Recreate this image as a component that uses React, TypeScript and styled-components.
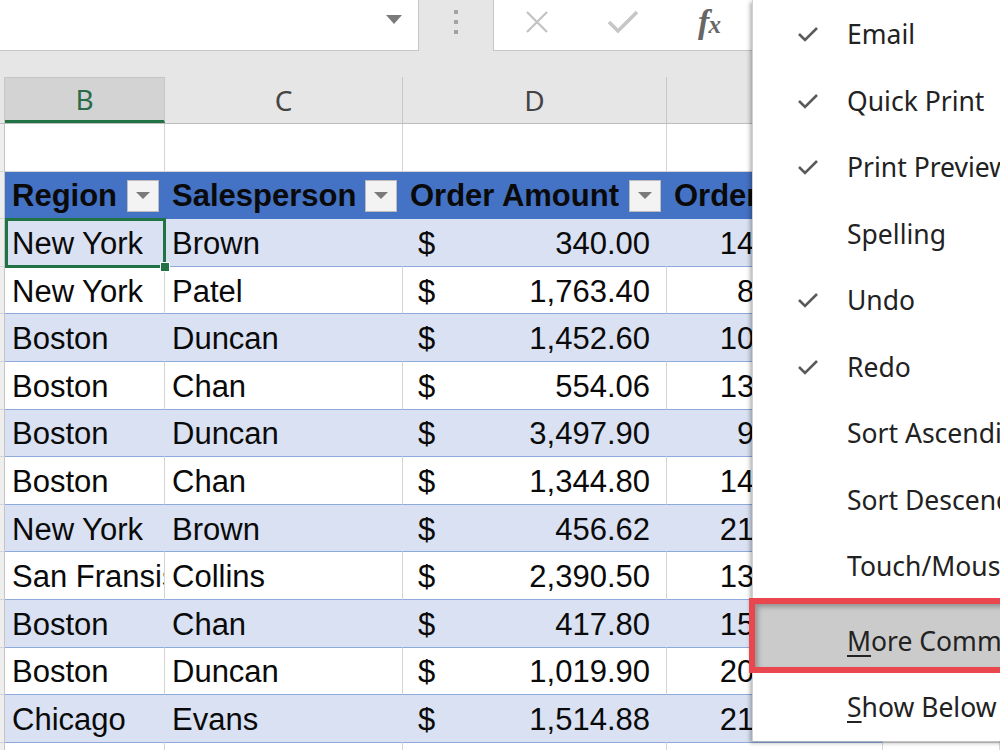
import React from "react";
import styled, { createGlobalStyle, css } from "styled-components";

const COLS = "5px 160px 238px 264px 216px 1fr";

const GlobalStyle = createGlobalStyle`
  html, body {
    margin: 0;
    padding: 0;
    width: 1000px;
    height: 750px;
    overflow: hidden;
    background: #fff;
  }
  body {
    font-family: "Liberation Sans", Arial, sans-serif;
  }
`;

type RowData = [string, string, string, string];

const rows: RowData[] = [
  ["New York", "Brown", "340.00", "14/01/2016"],
  ["New York", "Patel", "1,763.40", "8/02/2016"],
  ["Boston", "Duncan", "1,452.60", "10/02/2016"],
  ["Boston", "Chan", "554.06", "13/02/2016"],
  ["Boston", "Duncan", "3,497.90", "9/03/2016"],
  ["Boston", "Chan", "1,344.80", "14/03/2016"],
  ["New York", "Brown", "456.62", "21/03/2016"],
  ["San Fransisco", "Collins", "2,390.50", "13/04/2016"],
  ["Boston", "Chan", "417.80", "15/04/2016"],
  ["Boston", "Duncan", "1,019.90", "20/04/2016"],
  ["Chicago", "Evans", "1,514.88", "21/04/2016"],
];

const menuItems = [
  { label: "Email", checked: true },
  { label: "Quick Print", checked: true },
  { label: "Print Preview", checked: true },
  { label: "Spelling", checked: false },
  { label: "Undo", checked: true },
  { label: "Redo", checked: true },
  { label: "Sort Ascending", checked: false },
  { label: "Sort Descending", checked: false },
  { label: "Touch/Mouse Mode", checked: false },
];

const Screen = styled.div`
  position: relative;
  width: 1000px;
  height: 750px;
  overflow: hidden;
  background: #fff;
`;

/* formula bar area */
const TopBar = styled.div`
  display: flex;
  align-items: flex-start;
  height: 77px;
  background: #e6e6e6;
`;

const NameBox = styled.div`
  width: 419px;
  height: 51px;
  box-sizing: border-box;
  background: #fff;
  border-right: 1px solid #c6c6c6;
  border-bottom: 1px solid #c6c6c6;
  display: flex;
  justify-content: flex-end;
  padding: 15px 16px 0 0;
`;

const Caret = styled.span`
  width: 0;
  height: 0;
  border-left: 8px solid transparent;
  border-right: 8px solid transparent;
  border-top: 9px solid #7b7b7b;
`;

const Grip = styled.div`
  width: 74px;
  display: flex;
  flex-direction: column;
  align-items: center;
  gap: 6px;
  padding-top: 10px;
`;

const Dot = styled.span`
  width: 4px;
  height: 4px;
  background: #a3a3a3;
`;

const FormulaBox = styled.div`
  flex: 1;
  height: 51px;
  box-sizing: border-box;
  background: #fff;
  border-left: 1px solid #c6c6c6;
  border-bottom: 1px solid #c6c6c6;
  display: flex;
  align-items: center;
  padding-bottom: 6px;
`;

const IconSlot = styled.span`
  width: 86px;
  display: flex;
  justify-content: center;
  align-items: center;
`;

const Fx = styled.span`
  font-family: "Liberation Serif", serif;
  font-style: italic;
  font-weight: bold;
  color: #666;
  font-size: 34px;
  line-height: 1;
  letter-spacing: -1px;
  & small {
    font-size: 25px;
  }
`;

/* grid */
const ColHeads = styled.div`
  display: grid;
  grid-template-columns: ${COLS};
  height: 47px;
  box-sizing: border-box;
  background: #e6e6e6;
  border-bottom: 1px solid #bdbdbd;
  font-family: "Noto Sans", sans-serif;
  font-size: 28px;
  color: #444;
`;

const ColHead = styled.div<{ $active?: boolean }>`
  display: flex;
  align-items: center;
  justify-content: center;
  box-sizing: border-box;
  border-right: 1px solid #c6c6c6;
  ${(p) =>
    p.$active &&
    css`
      background: #d3d3d3;
      color: #2b6b47;
      border-top: 1px solid #c6c6c6;
      border-bottom: 3px solid #217346;
    `}
`;

const Row = styled.div`
  display: grid;
  grid-template-columns: ${COLS};
  height: 47.6px;
`;

const Stub = styled.div`
  background: #eeeeee;
  box-sizing: border-box;
  border-right: 1px solid #c4c4c4;
  border-bottom: 1px solid #d4d4d4;
`;

type Kind = "plain" | "band" | "white" | "head";

const fills: Record<Kind, string> = {
  plain: "#ffffff",
  band: "#d9e1f2",
  white: "#ffffff",
  head: "#4472c4",
};

const Cell = styled.div<{ $kind: Kind; $right?: boolean }>`
  position: relative;
  min-width: 0;
  box-sizing: border-box;
  display: flex;
  align-items: center;
  padding: 3px 7px 0;
  font-size: 31px;
  color: #0a0a0a;
  background: ${(p) => fills[p.$kind]};
  border-right: 1px solid
    ${(p) => (p.$kind === "plain" || p.$kind === "white" ? "#d4d4d4" : fills[p.$kind])};
  border-bottom: 1px solid
    ${(p) => (p.$kind === "plain" ? "#d4d4d4" : p.$kind === "head" ? "#4472c4" : "#8eaadb")};
  justify-content: ${(p) => (p.$right ? "flex-end" : "flex-start")};
  ${(p) =>
    p.$kind === "head" &&
    css`
      justify-content: space-between;
      padding: 2px 5px 0 7px;
      font-weight: bold;
    `}
`;

// text runs to the cell border before it is clipped, as in a sheet
const Text = styled.span`
  display: block;
  overflow: hidden;
  white-space: nowrap;
`;

const ClipText = styled(Text)`
  margin-right: -7px;
`;

const Money = styled.div`
  display: flex;
  justify-content: space-between;
  width: 100%;
  padding: 0 9px 0 8px;
`;

const FilterBtn = styled.span`
  flex-shrink: 0;
  width: 32px;
  height: 32px;
  box-sizing: border-box;
  background: #f3f3f3;
  border: 1px solid #bcbcbc;
  display: flex;
  align-items: center;
  justify-content: center;
  &::after {
    content: "";
    border-left: 7px solid transparent;
    border-right: 7px solid transparent;
    border-top: 7px solid #7a7a7a;
  }
`;

const Selection = styled.span`
  position: absolute;
  top: -1px;
  left: 0;
  right: -2px;
  bottom: -2px;
  border: 3px solid #217346;
  z-index: 2;
  &::after {
    content: "";
    position: absolute;
    right: -7px;
    bottom: -7px;
    width: 8px;
    height: 8px;
    background: #217346;
    border: 1px solid #fff;
  }
`;

/* quick access menu */
const Menu = styled.div`
  position: absolute;
  left: 752px;
  top: 0;
  width: 280px;
  padding-top: 1px;
  background: #fff;
  border-left: 1px solid #d0d0d0;
  box-shadow: -2px 2px 4px rgba(0, 0, 0, 0.3);
  font-family: "Noto Sans", "Open Sans", sans-serif;
  font-size: 26.5px;
  color: #222;
  z-index: 5;
`;

const MenuItem = styled.div`
  position: relative;
  display: grid;
  grid-template-columns: 94px 1fr;
  align-items: center;
  height: 66.5px;
  white-space: nowrap;
`;

const CheckSlot = styled.span`
  position: relative;
  z-index: 1;
  padding-left: 44px;
  display: flex;
`;

const Label = styled.span`
  position: relative;
  z-index: 1;
  & u {
    text-underline-offset: 4px;
  }
`;

const Separator = styled.div`
  height: 8px;
`;

const Highlight = styled.span`
  position: absolute;
  top: -9.5px;
  bottom: 1px;
  left: -4px;
  right: -30px;
  box-sizing: border-box;
  border: 6px solid #e9474d;
  background: #cbcbcb;
  box-shadow: inset 3px 3px 5px rgba(0, 0, 0, 0.28);
`;

const Check = () => (
  <svg width="22" height="16" viewBox="0 0 22 16">
    <polyline
      points="2,8 8,14 20,2"
      fill="none"
      stroke="#5a5a5a"
      strokeWidth="2.6"
    />
  </svg>
);

const CancelIcon = () => (
  <svg width="26" height="22" viewBox="0 0 26 22">
    <path d="M3 1 L23 21 M23 1 L3 21" stroke="#c2c2c2" strokeWidth="2.2" />
  </svg>
);

const EnterIcon = () => (
  <svg width="32" height="24" viewBox="0 0 32 24">
    <polyline
      points="2,12 11,21 30,2"
      fill="none"
      stroke="#c6c6c6"
      strokeWidth="3.6"
    />
  </svg>
);

export default function App() {
  return (
    <Screen>
      <GlobalStyle />
      <TopBar>
        <NameBox>
          <Caret />
        </NameBox>
        <Grip>
          <Dot />
          <Dot />
          <Dot />
        </Grip>
        <FormulaBox>
          <IconSlot>
            <CancelIcon />
          </IconSlot>
          <IconSlot>
            <EnterIcon />
          </IconSlot>
          <IconSlot>
            <Fx>
              f<small>x</small>
            </Fx>
          </IconSlot>
        </FormulaBox>
      </TopBar>

      <ColHeads>
        <ColHead />
        <ColHead $active>B</ColHead>
        <ColHead>C</ColHead>
        <ColHead>D</ColHead>
        <ColHead>E</ColHead>
        <ColHead>F</ColHead>
      </ColHeads>

      <Row>
        <Stub />
        <Cell $kind="plain" />
        <Cell $kind="plain" />
        <Cell $kind="plain" />
        <Cell $kind="plain" />
        <Cell $kind="plain" />
      </Row>

      <Row>
        <Stub />
        {["Region", "Salesperson", "Order Amount", "Order Date"].map((h) => (
          <Cell $kind="head" key={h}>
            <Text>{h}</Text>
            <FilterBtn />
          </Cell>
        ))}
        <Cell $kind="plain" />
      </Row>

      {rows.map((r, i) => {
        const kind: Kind = i % 2 === 0 ? "band" : "white";
        return (
          <Row key={i}>
            <Stub />
            <Cell $kind={kind}>
              <ClipText>{r[0]}</ClipText>
              {i === 0 && <Selection />}
            </Cell>
            <Cell $kind={kind}>
              <ClipText>{r[1]}</ClipText>
            </Cell>
            <Cell $kind={kind}>
              <Money>
                <span>$</span>
                <span>{r[2]}</span>
              </Money>
            </Cell>
            <Cell $kind={kind} $right>
              <Text>{r[3]}</Text>
            </Cell>
            <Cell $kind="plain" />
          </Row>
        );
      })}

      <Row>
        <Stub />
        <Cell $kind="plain" />
        <Cell $kind="plain" />
        <Cell $kind="plain" />
        <Cell $kind="plain" />
        <Cell $kind="plain" />
      </Row>

      <Menu>
        {menuItems.map((m) => (
          <MenuItem key={m.label}>
            <CheckSlot>{m.checked && <Check />}</CheckSlot>
            <Label>{m.label}</Label>
          </MenuItem>
        ))}
        <Separator />
        <MenuItem>
          <Highlight />
          <CheckSlot />
          <Label>
            <u>M</u>ore Commands...
          </Label>
        </MenuItem>
        <MenuItem>
          <CheckSlot />
          <Label>
            <u>S</u>how Below the Ribbon
          </Label>
        </MenuItem>
      </Menu>
    </Screen>
  );
}
